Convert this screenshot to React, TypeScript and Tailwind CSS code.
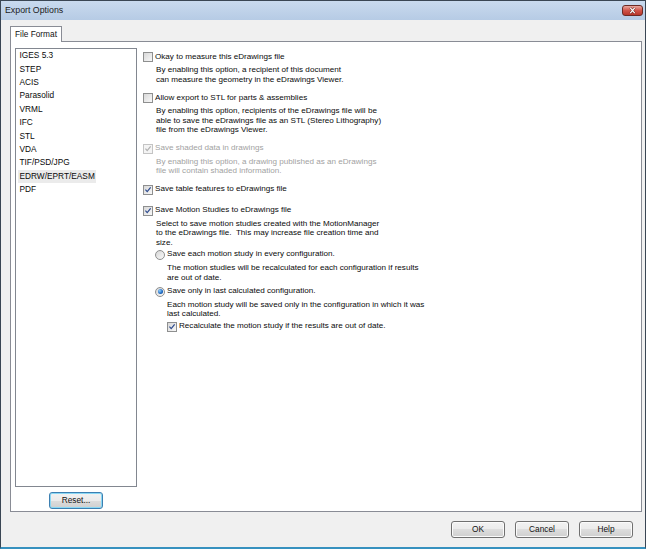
import React from "react";

const formats = [
  "IGES 5.3",
  "STEP",
  "ACIS",
  "Parasolid",
  "VRML",
  "IFC",
  "STL",
  "VDA",
  "TIF/PSD/JPG",
  "EDRW/EPRT/EASM",
  "PDF",
];

function Check({ checked, disabled }: { checked?: boolean; disabled?: boolean }) {
  return (
    <span
      className={`relative inline-flex h-[10px] w-[10px] shrink-0 items-center justify-center border ${
        disabled ? "border-[#c4c4c4] bg-[#f4f4f4]" : "border-[#8e8f8f] bg-[linear-gradient(135deg,#d8d8d8,#f8f8f8)]"
      }`}
    >
      {checked && (
        <svg viewBox="0 0 10 10" className="h-[9px] w-[9px]">
          <path
            d="M1.8 5.2 L4 7.6 L8.3 2.2"
            fill="none"
            stroke={disabled ? "#b0b0b0" : "#2c4a8e"}
            strokeWidth="1.5"
          />
        </svg>
      )}
    </span>
  );
}

function Radio({ checked }: { checked?: boolean }) {
  return (
    <span className="inline-flex h-[10px] w-[10px] shrink-0 items-center justify-center rounded-full border border-[#8e8f8f] bg-[linear-gradient(135deg,#d6d6d6,#fafafa)]">
      {checked && (
        <span className="h-[5px] w-[5px] rounded-full bg-[radial-gradient(circle_at_35%_35%,#8fd0ff,#1c67c0_60%,#0e3c80)]" />
      )}
    </span>
  );
}

function Row({
  children,
  control,
  disabled,
  className = "",
}: {
  children: React.ReactNode;
  control: React.ReactNode;
  disabled?: boolean;
  className?: string;
}) {
  return (
    <div className={`flex h-[12px] items-center gap-[2px] ${className}`}>
      {control}
      <span className={`whitespace-nowrap ${disabled ? "text-[#a2a2a2]" : "text-[#0a0a0a]"}`}>{children}</span>
    </div>
  );
}

function Desc({ lines, disabled, className = "" }: { lines: string[]; disabled?: boolean; className?: string }) {
  return (
    <div className={`whitespace-pre leading-[9.5px] ${disabled ? "text-[#a2a2a2]" : "text-[#0a0a0a]"} ${className}`}>
      {lines.map((l) => (
        <div key={l}>{l}</div>
      ))}
    </div>
  );
}

function Button({ children, focused }: { children: React.ReactNode; focused?: boolean }) {
  return (
    <div
      className={`flex h-[17px] w-[54px] items-center justify-center rounded-[3px] border text-[8.3px] text-[#111] ${
        focused
          ? "border-[#3c7fb1] bg-[linear-gradient(#f2f2f2_0%,#ebebeb_50%,#dddddd_50%,#cfcfcf_100%)] shadow-[inset_0_0_0_1px_#8ad8f5]"
          : "border-[#707070] bg-[linear-gradient(#f2f2f2_0%,#ebebeb_50%,#dddddd_50%,#cfcfcf_100%)] shadow-[inset_0_0_0_1px_#fbfbfb]"
      }`}
    >
      {children}
    </div>
  );
}

export default function App() {
  return (
    <div className="flex h-[549px] w-[646px] flex-col border-x border-t border-b-2 border-x-[#3a4654] border-t-[#3a4654] border-b-[#3791bf] bg-[#f0f0f0] font-['Liberation_Sans',Arial,sans-serif] text-[8.1px]">
      {/* title bar */}
      <div className="flex h-[19px] shrink-0 items-center justify-between bg-[linear-gradient(#c9daee,#b6cbe5)] pl-[4px] pr-[2px]">
        <span className="text-[8.8px] text-[#1b1b1b]">Export Options</span>
        <div className="flex h-[11px] w-[21px] items-center justify-center rounded-[3px] border border-[#6b2a24] bg-[linear-gradient(#e9a89f,#d0554a_50%,#b8362a)]">
          <svg viewBox="0 0 10 8" className="h-[7px] w-[9px]">
            <path d="M2.5 1 L7.5 7 M7.5 1 L2.5 7" stroke="#5a1c16" strokeWidth="2.6" />
            <path d="M2.5 1 L7.5 7 M7.5 1 L2.5 7" stroke="#fff" strokeWidth="1.5" />
          </svg>
        </div>
      </div>

      {/* tab */}
      <div className="mt-[6px] ml-[9px] flex">
        <div className="relative z-10 -mb-px flex h-[16px] items-center border border-b-0 border-[#898c95] bg-white px-[4px] text-[8.3px] text-[#111]">
          File Format
        </div>
      </div>

      {/* panel */}
      <div className="ml-[9px] mr-[3px] flex h-[471px] shrink-0 border border-[#898c95] bg-white">
        <div className="flex flex-col items-center pt-[6px] pl-[4px]">
          <div className="h-[439px] w-[122px] border border-[#828790] bg-white text-[8.3px] text-[#0a0a0a]">
            {formats.map((f) => (
              <div key={f} className="flex h-[13.4px] items-center pl-[2px]">
                <span className={`px-[1.5px] leading-[13px] ${f === "EDRW/EPRT/EASM" ? "bg-[#ebebeb]" : ""}`}>{f}</span>
              </div>
            ))}
          </div>
          <div className="mt-[5px]">
            <Button focused>Reset...</Button>
          </div>
        </div>

        <div className="ml-[6px] flex flex-col pt-[9px]">
          <Row control={<Check />}>Okay to measure this eDrawings file</Row>
          <Desc
            className="mt-[2px] ml-[13px]"
            lines={["By enabling this option, a recipient of this document", "can measure the geometry in the eDrawings Viewer."]}
          />

          <Row className="mt-[8px]" control={<Check />}>
            Allow export to STL for parts &amp; assemblies
          </Row>
          <Desc
            className="mt-[2px] ml-[13px]"
            lines={[
              "By enabling this option, recipients of the eDrawings file will be",
              "able to save the eDrawings file as an STL (Stereo Lithography)",
              "file from the eDrawings Viewer.",
            ]}
          />

          <Row className="mt-[8px]" disabled control={<Check checked disabled />}>
            Save shaded data in drawings
          </Row>
          <Desc
            disabled
            className="mt-[2px] ml-[13px]"
            lines={["By enabling this option, a drawing published as an eDrawings", "file will contain shaded information."]}
          />

          <Row className="mt-[8px]" control={<Check checked />}>
            Save table features to eDrawings file
          </Row>

          <Row className="mt-[9px]" control={<Check checked />}>
            Save Motion Studies to eDrawings file
          </Row>
          <Desc
            className="mt-[2px] ml-[13px]"
            lines={[
              "Select to save motion studies created with the MotionManager",
              "to the eDrawings file.  This may increase file creation time and",
              "size.",
            ]}
          />

          <div className="ml-[12px] flex flex-col">
            <Row className="mt-[1.5px]" control={<Radio />}>
              Save each motion study in every configuration.
            </Row>
            <Desc
              className="mt-[2.5px] ml-[12px]"
              lines={["The motion studies will be recalculated for each configuration if results", "are out of date."]}
            />

            <Row className="mt-[3.5px]" control={<Radio checked />}>
              Save only in last calculated configuration.
            </Row>
            <Desc
              className="mt-[2px] ml-[12px]"
              lines={["Each motion study will be saved only in the configuration in which it was", "last calculated."]}
            />
            <Row className="mt-[2px] ml-[12px]" control={<Check checked />}>
              Recalculate the motion study if the results are out of date.
            </Row>
          </div>
        </div>
      </div>

      {/* dialog buttons */}
      <div className="mt-[9px] flex justify-end gap-[10px] pr-[12px]">
        <Button>OK</Button>
        <Button>Cancel</Button>
        <Button>Help</Button>
      </div>
    </div>
  );
}
